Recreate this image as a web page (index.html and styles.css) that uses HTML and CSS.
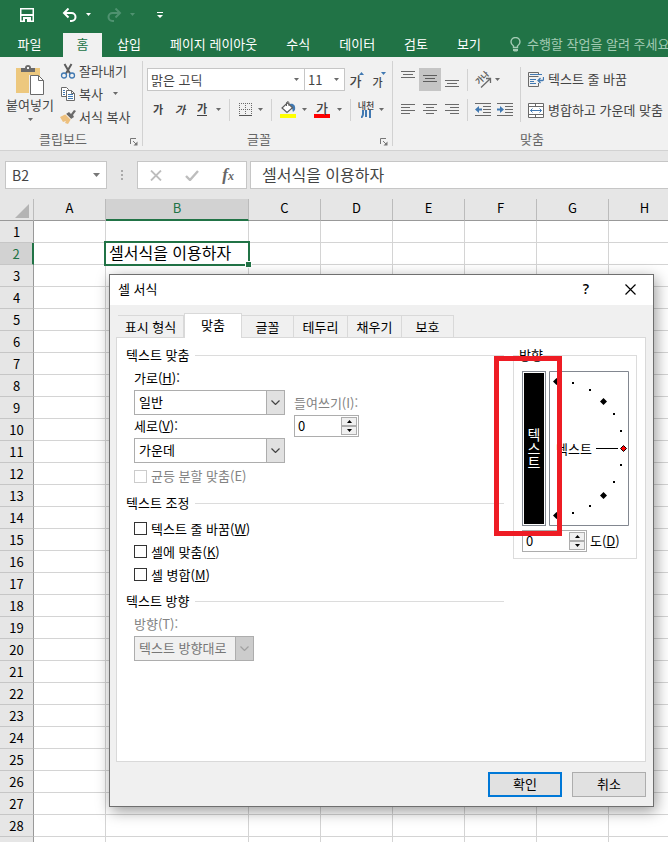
FILE: index.html
```html
<!DOCTYPE html>
<html lang="ko">
<head>
<meta charset="utf-8">
<title>셀 서식</title>
<link rel="stylesheet" href="styles.css">
</head>
<body>
<svg class="defs" width="0" height="0" aria-hidden="true">
  <symbol id="down" viewBox="0 0 5 3"><path d="M0 0h5L2.500 3z"/></symbol>
  <symbol id="up" viewBox="0 0 5 3"><path d="M0 3h5L2.500 0z"/></symbol>
  <symbol id="corner" viewBox="0 0 8 8"><path d="M.5 6V.5H6M3 3l3 3" fill="none" stroke="#777"/><path d="M7.500 3.500v4h-4z" fill="#777"/></symbol>
  <symbol id="chevron" viewBox="0 0 9 5"><path d="m.5.5 4 4 4-4" fill="none" stroke="currentColor" stroke-width="1.200"/></symbol>
</svg>
<div class="app">
  <header class="titlebar">
    <button class="qa qa-save" aria-label="저장"><svg width="14" height="14" viewBox="0 0 14 14"><path d="M.75.75h12.5v12.5H.75z" fill="none" stroke="#fff" stroke-width="1.5"/><path d="M1 7h12" stroke="#fff" stroke-width="2"/><path d="M3 9h8v5H3z" fill="#fff"/><path d="M5 11h2v3H5z" fill="#217346"/></svg></button>
    <button class="qa qa-undo" aria-label="실행 취소"><svg width="16" height="14" viewBox="0 0 16 14"><path d="M2 5h7.500a4 4 0 0 1 0 8H8" fill="none" stroke="#fff" stroke-width="2"/><path d="M6.500 0.500 2 5l4.500 4.500" fill="none" stroke="#fff" stroke-width="2"/></svg></button>
    <button class="qa qa-drop" aria-label="실행 취소 목록"><svg width="5" height="3" fill="#fff"><use href="#down"/></svg></button>
    <button class="qa qa-redo" aria-label="다시 실행"><svg width="16" height="14" viewBox="0 0 16 14"><path d="M14 5H6.500a4 4 0 0 0 0 8H8" fill="none" stroke="#4f9270" stroke-width="2"/><path d="M9.500 0.500 14 5 9.500 9.500" fill="none" stroke="#4f9270" stroke-width="2"/></svg></button>
    <button class="qa qa-drop" aria-label="다시 실행 목록"><svg width="5" height="3" fill="#4f9270"><use href="#down"/></svg></button>
    <button class="qa qa-more" aria-label="빠른 실행 도구 모음 사용자 지정"><svg width="6" height="6" viewBox="0 0 6 6"><path d="M0 0h6v1H0zM0 3h6L3 6z" fill="#fff"/></svg></button>
  </header>

  <nav class="tabs">
    <button class="tab tab-file">파일</button>
    <button class="tab tab-home">홈</button>
    <button class="tab">삽입</button>
    <button class="tab">페이지 레이아웃</button>
    <button class="tab">수식</button>
    <button class="tab">데이터</button>
    <button class="tab">검토</button>
    <button class="tab">보기</button>
    <button class="tab tab-tell"><svg width="11" height="15" viewBox="0 0 11 15"><path d="M3.500 10.500V9C2 8 1 6.800 1 5a4.500 4.500 0 0 1 9 0c0 1.800-1 3-2.500 4v1.500z" fill="none" stroke="#a3cbb4" stroke-width="1.400"/><path d="M3 12h5v1.500L7 14.500H4l-1-1z" fill="#a3cbb4"/></svg><span>수행할 작업을 알려 주세요</span></button>
  </nav>

  <section class="ribbon">
    <div class="group group-clip">
      <div class="group-body">
        <button class="big">
          <svg width="28" height="30" viewBox="0 0 28 30"><path d="M0 3h24v25H0z" fill="#edc87e"/><path d="M5 7V3h4a3 3 0 0 1 6 0h4v4z" fill="#6a6a6a"/><path d="M11 2h2v2h-2z" fill="#f1f1f1"/><path d="M13 10h10v20H13z" fill="#f1f1f1"/><path d="M14.500 10.500h8l5 5v14h-13z" fill="#fff" stroke="#6a6a6a"/><path d="M22.500 10.500v5h5" fill="none" stroke="#6a6a6a"/></svg>
          <span>붙여넣기</span>
          <svg class="caret" width="5" height="3"><use href="#down"/></svg>
        </button>
        <div class="stack">
          <button class="small"><svg width="16" height="16" viewBox="0 0 16 16"><path d="M4.500 1 10 10.500M11.500 1 6 10.500" fill="none" stroke="#5d5d5d" stroke-width="2"/><circle cx="4" cy="12.500" r="2.500" fill="none" stroke="#4179b2" stroke-width="1.300"/><circle cx="12" cy="12.500" r="2.500" fill="none" stroke="#4179b2" stroke-width="1.300"/></svg><span>잘라내기</span></button>
          <button class="small"><svg width="16" height="16" viewBox="0 0 16 16"><path d="M1.500 1.500h5l2 2v7h-7z" fill="#fff" stroke="#6a6a6a"/><path d="M6.500 4.500h5l3 3v7h-8z" fill="#fff" stroke="#6a6a6a"/><path d="M11.500 4.500v3h3" fill="none" stroke="#6a6a6a"/><path d="M3 4.500h2M3 6.500h2M3 8.500h2M8 8.500h5M8 10.500h5M8 12.500h5" stroke="#4179b2"/></svg><span>복사</span><svg class="caret" width="5" height="3"><use href="#down"/></svg></button>
          <button class="small"><svg width="16" height="16" viewBox="0 0 16 16"><path d="M0 8l6-3 5 5-3 5-3-1 1-2-3 1z" fill="#edc07e"/><path d="m6 5 3-2 2 2 3-4 2 1-3 4 1 2-3 2z" fill="#6a6a6a"/><path d="m5 4.500 6 6" stroke="#fff"/></svg><span>서식 복사</span></button>
        </div>
      </div>
      <div class="group-foot"><span>클립보드</span><button class="launch" aria-label="클립보드 옵션"><svg width="8" height="8"><use href="#corner"/></svg></button></div>
    </div>

    <div class="group group-font">
      <div class="group-body rows">
        <div class="row">
          <span class="combo combo-name"><select aria-label="글꼴"><option>맑은 고딕</option></select><svg class="caret" width="5" height="3"><use href="#down"/></svg></span>
          <span class="combo combo-size"><select aria-label="글꼴 크기"><option>11</option></select><svg class="caret" width="5" height="3"><use href="#down"/></svg></span>
          <button class="tool grow"><span>가</span><svg width="5" height="3" fill="#4179b2"><use href="#up"/></svg></button>
          <button class="tool shrink"><span>가</span><svg width="5" height="3" fill="#4179b2"><use href="#down"/></svg></button>
        </div>
        <div class="row">
          <button class="tool glyph bold">가</button>
          <button class="tool glyph italic">가</button>
          <button class="tool glyph under"><span>가</span></button>
          <button class="drop" aria-label="밑줄 목록"><svg class="caret" width="5" height="3"><use href="#down"/></svg></button>
          <i class="sep"></i>
          <button class="tool t20" aria-label="테두리"><svg width="13" height="13" viewBox="0 0 13 13"><path d="M0 .5h13M0 6.500h13M.5 0v13M6.500 0v13M12.500 0v13" stroke="#6a6a6a" stroke-dasharray="1 1"/><path d="M0 12.500h13" stroke="#555"/></svg></button>
          <button class="drop" aria-label="테두리 목록"><svg class="caret" width="5" height="3"><use href="#down"/></svg></button>
          <i class="sep"></i>
          <button class="tool" aria-label="채우기 색"><svg width="16" height="17" viewBox="0 0 16 17"><path d="M10 3c3-1 6 1 5 6l-2 2c-1-3 0-4-3-5z" fill="#4179b2"/><path d="m7.500 1.800 5 5-5.500 4.700L2 7z" fill="#fff" stroke="#5d5d5d" stroke-width="1.200"/><path d="M6.500 5V1.500Q8-.5 9 1.500V5" fill="none" stroke="#5d5d5d"/><path d="M0 13h16v4H0z" fill="#ff0"/></svg></button>
          <button class="drop" aria-label="채우기 색 목록"><svg class="caret" width="5" height="3"><use href="#down"/></svg></button>
          <button class="tool t24 fontcolor"><span>가</span></button>
          <button class="drop" aria-label="글꼴 색 목록"><svg class="caret" width="5" height="3"><use href="#down"/></svg></button>
          <i class="sep"></i>
          <button class="tool t20 ruby"><span>내천</span><svg width="10" height="8" viewBox="0 0 10 8"><path d="M2 0v4q0 2-2 4M5 0v7M9 0v8" fill="none" stroke="#4179b2" stroke-width="2"/></svg></button>
          <button class="drop" aria-label="윗주 목록"><svg class="caret" width="5" height="3"><use href="#down"/></svg></button>
        </div>
      </div>
      <div class="group-foot"><span>글꼴</span><button class="launch" aria-label="글꼴 옵션"><svg width="8" height="8"><use href="#corner"/></svg></button></div>
    </div>

    <div class="group group-align">
      <div class="group-body">
        <div class="rows align-rows">
          <div class="row">
            <button class="tool" aria-label="위쪽 맞춤"><svg width="14" height="23" viewBox="0 0 14 23"><path d="M0 3.500h14M2 6.500h10M0 9.500h14" stroke="#6a6a6a"/></svg></button>
            <button class="tool pressed" aria-label="가운데 맞춤"><svg width="14" height="23" viewBox="0 0 14 23"><path d="M0 7.500h14M2 10.500h10M0 13.500h14" stroke="#5d5d5d"/></svg></button>
            <button class="tool" aria-label="아래쪽 맞춤"><svg width="14" height="23" viewBox="0 0 14 23"><path d="M0 12.500h14M2 15.500h10M0 18.500h14" stroke="#6a6a6a"/></svg></button>
            <i class="sep near"></i>
            <button class="tool" aria-label="방향"><svg class="angle" width="18" height="18" viewBox="0 0 18 18"><path d="M7 16.500 16.500 7.500M16.500 12V7.500H12" fill="none" stroke="#6a6a6a" stroke-width="1.300"/><text transform="translate(5 14) rotate(-45)" font-size="8" font-weight="700" fill="#5d5d5d">가나</text></svg></button>
            <button class="drop narrow" aria-label="방향 목록"><svg class="caret" width="5" height="3"><use href="#down"/></svg></button>
          </div>
          <div class="row">
            <button class="tool" aria-label="왼쪽 맞춤"><svg width="14" height="11" viewBox="0 0 14 11"><path d="M0 .5h14M0 3.500h9M0 6.500h14M0 9.500h9" stroke="#6a6a6a"/></svg></button>
            <button class="tool" aria-label="텍스트 가운데 맞춤"><svg width="14" height="11" viewBox="0 0 14 11"><path d="M0 .5h14M3 3.500h8M0 6.500h14M3 9.500h8" stroke="#6a6a6a"/></svg></button>
            <button class="tool" aria-label="오른쪽 맞춤"><svg width="14" height="11" viewBox="0 0 14 11"><path d="M0 .5h14M5 3.500h9M0 6.500h14M5 9.500h9" stroke="#6a6a6a"/></svg></button>
            <i class="sep near"></i>
            <button class="tool" aria-label="내어쓰기"><svg width="16" height="13" viewBox="0 0 16 13"><path d="M0 .5h16M8 3.500h8M8 6.500h8M8 9.500h8M0 12.500h16" stroke="#6a6a6a"/><path d="M0 6.500 4 3v2.500h3v2H4V10z" fill="#4179b2"/></svg></button>
            <button class="tool" aria-label="들여쓰기"><svg width="16" height="13" viewBox="0 0 16 13"><path d="M0 .5h16M8 3.500h8M8 6.500h8M8 9.500h8M0 12.500h16" stroke="#6a6a6a"/><path d="M7 6.500 3 3v2.500H0v2h3V10z" fill="#4179b2"/></svg></button>
          </div>
        </div>
        <i class="sep tall"></i>
        <div class="rows wide-rows">
          <button class="small"><svg width="16" height="15" viewBox="0 0 16 15"><path d="M10.500 3V.500H.5v4h10M10.500 11v3.500H.5v-10" fill="none" stroke="#6a6a6a"/><path d="M2 2.500h12M2 7.500h6M2 9.500h4M2 11.500h6" stroke="#4179b2"/><path d="M15.500 5v2.500q0 1-1 1H11M12.500 6 10 8.500l2.500 2.500" fill="none" stroke="#4179b2" stroke-width="1.300"/></svg><span>텍스트 줄 바꿈</span></button>
          <button class="small"><svg width="16" height="15" viewBox="0 0 16 15"><path d="M.5.5h15v14H.5zM.5 3.500h15M.5 11.500h15M7.500.5v3M7.500 11.500v3" fill="#fff" stroke="#6a6a6a"/><path d="M2.500 7.500h11M4.500 5.500l-2 2 2 2M11.500 5.500l2 2-2 2" fill="none" stroke="#4179b2"/></svg><span>병합하고 가운데 맞춤</span></button>
        </div>
      </div>
      <div class="group-foot"><span>맞춤</span></div>
    </div>
  </section>

  <section class="formula">
    <label class="namebox"><input aria-label="이름 상자" value="B2"><svg width="7" height="4" viewBox="0 0 7 4"><path d="M0 0h7L3.500 4z" fill="#777"/></svg></label>
    <svg class="dots" width="2" height="10" viewBox="0 0 2 10"><path d="M0 0h2v2H0zM0 4h2v2H0zM0 8h2v2H0z" fill="#aaa"/></svg>
    <div class="fxbox">
      <button aria-label="취소"><svg width="12" height="11" viewBox="0 0 12 11"><path d="m1 .5 10 10M11 .5l-10 10" stroke="#bdbdbd" stroke-width="1.800"/></svg></button>
      <button aria-label="입력"><svg width="14" height="11" viewBox="0 0 14 11"><path d="m1 6 4 4 8-9" fill="none" stroke="#bdbdbd" stroke-width="2.400"/></svg></button>
      <button class="fx" aria-label="함수 삽입">f<sub>x</sub></button>
    </div>
    <input class="formula-input" aria-label="수식 입력줄" value="셀서식을 이용하자">
  </section>

  <main class="sheet">
    <table class="grid">
      <colgroup><col class="c-head"><col class="c"><col class="c-b"><col class="c"><col class="c"><col class="c"><col class="c"><col class="c"><col class="c"></colgroup>
      <thead><tr><th class="corner"><svg width="14" height="14" viewBox="0 0 14 14"><path d="M14 0v14H0z" fill="#b4b4b4"/></svg></th><th>A</th><th class="on">B</th><th>C</th><th>D</th><th>E</th><th>F</th><th>G</th><th>H</th></tr></thead>
      <tbody id="rows">
        <tr><th>1</th><td></td><td></td><td></td><td></td><td></td><td></td><td></td><td></td></tr>
        <tr><th class="on">2</th><td></td><td class="active">셀서식을 이용하자</td><td></td><td></td><td></td><td></td><td></td><td></td></tr>
      </tbody>
    </table>
  </main>

  <div class="dialog" role="dialog" aria-labelledby="dlg-title">
    <div class="dlg-bar">
      <span id="dlg-title">셀 서식</span>
      <button class="dlg-help" aria-label="도움말">?</button>
      <button class="dlg-close" aria-label="닫기"><svg width="11" height="11" viewBox="0 0 11 11"><path d="m.5.5 10 10M10.500.5l-10 10" stroke="#000" stroke-width="1.200"/></svg></button>
    </div>
    <div class="dlg-tabs">
      <button class="dt dt-wide">표시 형식</button>
      <button class="dt dt-on">맞춤</button>
      <button class="dt dt-short">글꼴</button>
      <button class="dt">테두리</button>
      <button class="dt">채우기</button>
      <button class="dt dt-short">보호</button>
    </div>
    <div class="panel">
      <div class="left">
        <h2>텍스트 맞춤</h2>
        <div class="align-grid">
          <div class="fields">
            <label for="hz">가로(<u>H</u>):</label>
            <span class="pick"><select id="hz"><option>일반</option></select><span class="pick-btn"><svg width="9" height="5"><use href="#chevron"/></svg></span></span>
            <label class="second" for="vt">세로(<u>V</u>):</label>
            <span class="pick"><select id="vt"><option>가운데</option></select><span class="pick-btn"><svg width="9" height="5"><use href="#chevron"/></svg></span></span>
          </div>
          <div class="indent">
            <label class="off" for="ind">들여쓰기(I):</label>
            <span class="spin"><input id="ind" value="0"><span class="spin-btns"><button aria-label="늘리기"><svg width="5" height="3"><use href="#up"/></svg></button><button aria-label="줄이기"><svg width="5" height="3"><use href="#down"/></svg></button></span></span>
          </div>
        </div>
        <label class="check off justify"><input type="checkbox" disabled>균등 분할 맞춤(E)</label>
        <h2>텍스트 조정</h2>
        <div class="checks">
          <label class="check"><input type="checkbox"><span>텍스트 줄 바꿈(<u>W</u>)</span></label>
          <label class="check"><input type="checkbox"><span>셀에 맞춤(<u>K</u>)</span></label>
          <label class="check"><input type="checkbox"><span>셀 병합(<u>M</u>)</span></label>
        </div>
        <h2>텍스트 방향</h2>
        <div class="fields narrow-fields">
          <label class="off" for="dir">방향(T):</label>
          <span class="pick pick-off"><select id="dir" disabled><option>텍스트 방향대로</option></select><span class="pick-btn"><svg width="9" height="5"><use href="#chevron"/></svg></span></span>
        </div>
      </div>
      <fieldset class="orient">
        <legend>방향</legend>
        <div class="orient-row">
          <button class="vert"><span>텍스트</span></button>
          <svg class="dial" width="80" height="155" viewBox="0 0 80 155">
            <path d="M.5.5h79v154H.5z" fill="#fff" stroke="#828790"/>
            <path d="M23 11h2v2h-2zM40 18h2v2h-2zM64 42h2v2h-2zM71 59h2v2h-2zM71 93h2v2h-2zM64 110h2v2h-2zM40 134h2v2h-2zM23 141h2v2h-2z"/>
            <path d="m54.500 27 3.500 3.500-3.500 3.500-3.500-3.500zM54.500 121l3.500 3.500-3.500 3.500-3.500-3.500zM7.500 7l3.500 3.500L7.500 14 4 10.500zM7.500 141l3.500 3.500-3.500 3.500L4 144.500z"/>
            <path d="M47 77h22v1H47z"/>
            <path d="m74.500 74.500 3 3-3 3-3-3z" fill="#f00" stroke="#000"/>
            <text x="7" y="83" font-size="13">텍스트</text>
          </svg>
        </div>
        <div class="deg">
          <span class="spin"><input id="deg" value="0"><span class="spin-btns"><button aria-label="각도 늘리기"><svg width="5" height="3"><use href="#up"/></svg></button><button aria-label="각도 줄이기"><svg width="5" height="3"><use href="#down"/></svg></button></span></span>
          <label for="deg">도(<u>D</u>)</label>
        </div>
        <div class="marker"></div>
      </fieldset>
    </div>
    <div class="dlg-foot">
      <button class="ok">확인</button>
      <button>취소</button>
    </div>
  </div>
</div>
<script src="grid.js"></script>
</body>
</html>
```
FILE: grid.js
```js
// Append the empty worksheet rows below the two that hold content,
// and one unnumbered row that runs off the bottom edge.
const body = document.getElementById("rows");
const lastRow = 28;
for (let n = 3; n <= lastRow + 1; n++) {
  const row = body.insertRow();
  const head = document.createElement("th");
  if (n <= lastRow) head.textContent = n;
  row.append(head);
  for (let c = 0; c < 8; c++) row.insertCell();
}
```
FILE: styles.css
```css
* { box-sizing: border-box; }
body {
  margin: 0;
  font: 13px/18px "Noto Sans CJK KR", sans-serif;
  color: #000;
}
button, input, select {
  font: inherit;
  color: inherit;
  margin: 0;
  padding: 0;
  border: 0;
  border-radius: 0;
  background: none;
}
select { appearance: none; opacity: 1; }
svg { display: block; flex: none; }
.defs { position: absolute; }
.app {
  position: relative;
  display: flex;
  flex-direction: column;
  height: 100vh;
  overflow: hidden;
  background: #e6e6e6;
}

/* title bar and ribbon tabs */
.titlebar {
  display: flex;
  align-items: center;
  flex: none;
  height: 33px;
  padding: 0 0 4px 20px;
  background: #217346;
}
.qa { display: flex; }
.qa-undo { margin-left: 28px; }
.qa-redo { margin-left: 15px; }
.qa-drop { margin-left: 8px; }
.qa-more { margin-left: 22px; }
.tabs {
  display: flex;
  flex: none;
  gap: 1px;
  height: 24px;
  background: #217346;
  color: #fff;
  overflow: hidden;
}
.tab { flex: none; padding: 0 14px 2px; line-height: 22px; white-space: nowrap; }
.tab-file { width: 59px; margin-right: 3px; padding: 0 0 2px; }
.tab-home { width: 39px; padding: 0 0 2px; background: #f1f1f1; color: #217346; }
.tab-tell { display: flex; align-items: center; gap: 6px; color: #a3cbb4; }

/* ribbon */
.ribbon {
  display: flex;
  flex: none;
  height: 94px;
  background: #f1f1f1;
  border-bottom: 1px solid #d2d2d2;
  color: #444;
  overflow: hidden;
}
.group { position: relative; display: flex; flex-direction: column; flex: none; }
.group + .group { background: linear-gradient(#d2d2d2, #d2d2d2) 0 4px / 1px 85px no-repeat; }
.group-clip { width: 142px; }
.group-font { width: 250px; }
.group-align { width: 280px; }
.group-body { display: flex; height: 74px; }
.group-foot { display: flex; height: 20px; color: #666; text-align: center; }
.group-foot span { flex: 1; }
.launch { display: flex; width: 16px; padding: 8px 4px 0 4px; }
.caret { fill: #6a6a6a; }
.big {
  display: flex;
  flex-direction: column;
  align-items: center;
  width: 60px;
  padding: 8px 0 0 0;
}
.big span { margin-top: 1px; }
.big .caret { margin-top: 4px; }
.stack { display: flex; flex-direction: column; padding-top: 2px; }
.stack .small { height: 23px; }
.small { display: flex; align-items: center; gap: 3px; white-space: nowrap; }
.small .caret { margin-left: 7px; }
.rows { display: flex; flex-direction: column; gap: 7px; padding: 11px 0 0 5px; }
.row { display: flex; align-items: center; height: 23px; }
.tool { display: flex; align-items: center; justify-content: center; width: 22px; height: 23px; }
.t20 { width: 20px; }
.t24 { width: 24px; }
.drop { display: flex; justify-content: center; width: 11px; padding: 10px 0; }
.sep { flex: none; width: 1px; height: 22px; margin: 0 5px; background: #d2d2d2; }
.combo { display: grid; align-items: center; height: 23px; background: #fff; border: 1px solid #c6c6c6; }
.combo select { grid-area: 1 / 1; width: 100%; padding-left: 3px; }
.combo .caret { grid-area: 1 / 1; justify-self: end; margin-right: 5px; pointer-events: none; }
.combo-name { width: 158px; }
.combo-size { width: 40px; border-left: 0; }
.grow, .shrink { align-items: flex-start; font-weight: 500; }
.grow { margin-left: 1px; }
.grow span { font-size: 13px; line-height: 26px; }
.shrink span { font-size: 11px; line-height: 28px; }
.grow svg, .shrink svg { margin: 4px 0 0 -2px; }
.glyph { padding-bottom: 2px; font-size: 11px; font-weight: 700; }
.italic { font-style: italic; }
.under span { border-bottom: 1px solid #444; line-height: 14px; }
.fontcolor span { width: 16px; border-bottom: 4px solid #f00; font-size: 13px; font-weight: 500; line-height: 13px; }
.ruby { flex-direction: column; align-items: center; font-size: 9px; line-height: 9px; font-weight: 500; }
.ruby span { white-space: nowrap; }
.align-rows { padding-left: 5px; }
.pressed { background: #c5c5c5; }
.near { margin: 0 4px; }
.angle { overflow: visible; }
.narrow { width: 6px; }
.tall { height: 55px; margin: 10px 0 0 4px; }
.wide-rows { padding: 10px 0 0 7px; }
.wide-rows .small { height: 24px; gap: 4px; }

/* formula bar */
.formula {
  display: flex;
  flex: none;
  align-items: center;
  height: 48px;
  padding: 0 0 0 5px;
  color: #444;
}
.namebox {
  display: flex;
  align-items: center;
  width: 102px;
  height: 28px;
  padding: 0 6px;
  background: #fff;
  border: 1px solid #c6c6c6;
  font-size: 14px;
}
.namebox input { flex: 1; min-width: 0; }
.dots { margin: 0 14px; }
.fxbox {
  display: flex;
  align-items: center;
  justify-content: space-between;
  width: 110px;
  height: 28px;
  padding: 0 12px;
  background: #fff;
  border: 1px solid #c6c6c6;
}
.fx { font: italic bold 17px/20px "Liberation Serif", serif; color: #666; }
.fx sub { font-size: 12px; vertical-align: baseline; }
.formula-input {
  flex: 1;
  min-width: 0;
  height: 28px;
  margin-left: 3px;
  padding: 0 11px 3px;
  background: #fff;
  border: 1px solid #c6c6c6;
  border-right: 0;
  font-size: 16px;
}

/* worksheet */
.sheet { flex: 1; min-height: 0; overflow: hidden; }
.grid { table-layout: fixed; width: 681px; border-collapse: separate; border-spacing: 0; }
.c-head { width: 34px; }
.c { width: 72px; }
.c-b { width: 143px; }
.grid th, .grid td { height: 22px; padding: 0; border-right: 1px solid #d4d4d4; border-bottom: 1px solid #d4d4d4; }
.grid td { background: #fff; }
.grid th { background: #e6e6e6; font-weight: 400; line-height: 20px; text-align: center; }
.grid thead th { padding-bottom: 3px; border-right-color: #bbb; border-bottom-color: #999; line-height: 18px; }
.grid tbody th { border-right-color: #999; border-bottom-color: #c6c6c6; }
.grid .corner { padding: 3px 3px 0 15px; }
.grid thead .on { background: #d2d2d2; color: #217346; border-bottom: 2px solid #217346; padding-bottom: 2px; }
.grid tbody .on { background: #d2d2d2; color: #217346; border-right: 2px solid #217346; }
.grid .active { position: relative; padding: 0 0 3px 3px; font-size: 16px; line-height: 18px; white-space: nowrap; }
.active::before { content: ""; position: absolute; inset: -2px; border: 2px solid #217346; }
.active::after { content: ""; position: absolute; right: -3px; bottom: -3px; width: 5px; height: 5px; background: #217346; outline: 1px solid #fff; }

/* format-cells dialog */
.dialog {
  position: absolute;
  left: 109px;
  top: 274px;
  width: 545px;
  background: #f0f0f0;
  border: 1px solid #6f6f6f;
  box-shadow: 2px 4px 14px rgba(0, 0, 0, .4);
}
.dlg-bar { display: flex; align-items: center; height: 30px; padding: 0 17px 2px 8px; background: #fff; }
.dlg-bar span { flex: 1; }
.dlg-help { font: 600 14px/18px "Open Sans", sans-serif; }
.dlg-close { margin-left: 36px; }
.dlg-tabs { display: flex; align-items: flex-end; height: 32px; padding-left: 8px; }
.dt { width: 54px; height: 22px; border: 1px solid #d9d9d9; border-left: 0; border-bottom: 0; }
.dt-wide { width: 66px; }
.dt-short { width: 52px; }
.dt-on {
  position: relative;
  z-index: 1;
  width: 58px;
  height: 25px;
  margin-bottom: -1px;
  padding-bottom: 2px;
  border-left: 1px solid #d9d9d9;
  background: #fff;
}
.panel {
  display: flex;
  align-items: flex-start;
  justify-content: space-between;
  height: 425px;
  margin: 0 7px 0 6px;
  padding: 8px 8px 0 9px;
  background: #fff;
  border: 1px solid #d9d9d9;
}
.left { width: 378px; }
h2 { display: flex; align-items: center; gap: 6px; margin: 0; font: inherit; white-space: nowrap; }
h2::after { content: ""; flex: 1; height: 1px; background: #dcdcdc; }
.align-grid { display: flex; gap: 9px; padding: 5px 0 0 8px; }
.fields { display: flex; flex-direction: column; gap: 3px; width: 151px; }
.second { margin-top: -1px; }
.indent { display: flex; flex-direction: column; gap: 3px; padding-top: 25px; }
.off { color: #838383; }
.pick { display: grid; grid-template-columns: 1fr 18px; height: 25px; border: 1px solid #adadad; background: #fff; }
.pick select { grid-column: 1 / 3; grid-row: 1; padding: 0 0 2px 4px; }
.pick-btn {
  grid-column: 2;
  grid-row: 1;
  display: flex;
  align-items: center;
  justify-content: center;
  background: #e1e1e1;
  border-left: 1px solid #adadad;
  color: #444;
  pointer-events: none;
}
.pick-off { background: #f0f0f0; color: #777; }
.pick-off .pick-btn { background: #ccc; color: #a0a0a0; }
.spin { display: flex; width: 65px; height: 22px; padding: 1px; border: 1px solid #adadad; background: #fff; }
.spin input { flex: 1; min-width: 0; padding-left: 2px; }
.spin-btns { display: flex; flex-direction: column; width: 16px; }
.spin-btns button {
  flex: 1;
  display: flex;
  align-items: center;
  justify-content: center;
  background: #f0f0f0;
  border: 1px solid #adadad;
}
.check { display: flex; align-items: center; gap: 4px; height: 23px; }
.check input { appearance: none; width: 13px; height: 13px; border: 1px solid #333; background: #fff; }
.check input:disabled { border-color: #ccc; }
.justify { height: 18px; margin: 4px 0 9px 8px; }
.checks { padding: 5px 0 6px 8px; }
.narrow-fields { width: 128px; padding: 5px 0 0 8px; }

.orient { position: relative; width: 124px; height: 213px; margin: 0; padding: 7px 7px 0 8px; border: 1px solid #dcdcdc; }
.orient legend { margin-left: -3px; padding: 0; }
.orient-row { display: flex; gap: 3px; }
.vert {
  display: flex;
  align-items: center;
  justify-content: center;
  width: 24px;
  height: 155px;
  padding: 1px;
  border: 1px solid #828790;
  background: #000 content-box;
  color: #fff;
  font-size: 14px;
}
.vert span { writing-mode: vertical-rl; text-orientation: upright; }
.deg { display: flex; align-items: center; gap: 3px; margin-top: 4px; }
.marker {
  position: absolute;
  left: -20px;
  top: -8px;
  width: 68px;
  height: 180px;
  border: 5px solid #ee1c24;
  pointer-events: none;
}
.dlg-foot { display: flex; justify-content: flex-end; gap: 10px; padding: 10px 7px 9px; }
.dlg-foot button { width: 74px; height: 25px; padding-bottom: 2px; background: #e1e1e1; border: 1px solid #adadad; }
.dlg-foot .ok { border: 2px solid #0078d7; }
```
